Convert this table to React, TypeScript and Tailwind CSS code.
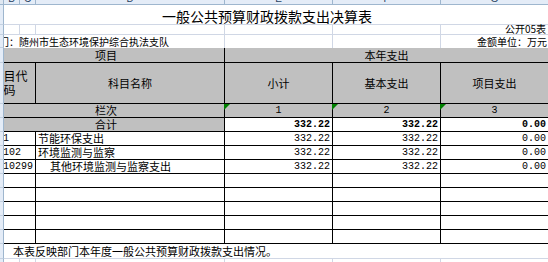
import React from 'react';

const cjk = "font-['Noto_Sans_CJK_SC','Noto_Sans_CJK_JP',sans-serif]";
const mono = "font-['Liberation_Mono','DejaVu_Sans_Mono',monospace]";

const lines = [
  { code: '211', name: '节能环保支出', indent: false, total: '332.22', basic: '332.22', project: '0.00' },
  { code: '21102', name: '环境监测与监察', indent: false, total: '332.22', basic: '332.22', project: '0.00' },
  { code: '2110299', name: '其他环境监测与监察支出', indent: true, total: '332.22', basic: '332.22', project: '0.00' },
];

function Strip() {
  return <div className="border-r border-b border-r-[#9eb6ce] border-b-[#c3d0e0] bg-[#e4ecf7]" />;
}

function ColHead({ letter }: { letter: string }) {
  return (
    <div className="overflow-hidden border-r border-b border-[#9eb6ce] bg-[#e4ecf7] text-center">
      <div className="-mt-[6px] font-['Liberation_Sans',sans-serif] text-[10px] leading-[10px] text-[#27415f]">
        {letter}
      </div>
    </div>
  );
}

function Flag() {
  return (
    <span className="absolute -left-px top-0 h-0 w-0 border-t-[6px] border-r-[6px] border-t-[#008000] border-r-transparent" />
  );
}

export default function App() {
  const blackCell = 'border-r border-b border-black';
  const lightCell = 'border-r border-b border-[#d0d7e5]';
  const num = `${blackCell} ${mono} flex items-center justify-end pr-[2px] text-[10px] leading-[13px] text-black`;

  return (
    <div className={`h-[262px] w-[548px] overflow-hidden bg-white text-black ${cjk}`}>
      <div className="grid w-[549px] grid-cols-[4px_16px_16px_189px_108px_108px_108px] grid-rows-[5px_20px_10px_13px_15px_41px_14px_14px_repeat(8,14px)_15px_4px]">
        {/* column letters */}
        <div className="border-r border-b border-[#9eb6ce] bg-[#dfe7f1]" />
        {['B', 'C', 'D', 'E', 'F', 'G'].map((l) => (
          <ColHead key={l} letter={l} />
        ))}

        {/* title */}
        <Strip />
        <div className="col-span-6 flex items-end justify-center border-b border-[#d0d7e5] pr-[19px] text-[14px] leading-[16px]">
          一般公共预算财政拨款支出决算表
        </div>

        {/* form number */}
        <Strip />
        <div className={lightCell} />
        <div className={lightCell} />
        <div className={lightCell} />
        <div className={lightCell} />
        <div className={lightCell} />
        <div className={`${lightCell} flex items-end justify-end pr-[2px] text-[10px] leading-[10px]`}>
          公开05表
        </div>

        {/* unit row */}
        <Strip />
        <div className="col-span-3 flex items-end overflow-hidden border-r border-[#d0d7e5] text-[10px] leading-[12px]">
          <span className="-ml-[15px] whitespace-nowrap">部门：随州市生态环境保护综合执法支队</span>
        </div>
        <div className="border-r border-[#d0d7e5]" />
        <div className="border-r border-[#d0d7e5]" />
        <div className="flex items-end justify-end whitespace-nowrap pr-[2px] text-[10px] leading-[12px]">
          金额单位：万元
        </div>

        {/* header row 1 */}
        <Strip />
        <div className={`${blackCell} col-span-3 flex items-center justify-center bg-[#c0c0c0] pr-[16px] text-[11px] leading-[13px]`}>
          项目
        </div>
        <div className={`${blackCell} col-span-3 flex items-center justify-center bg-[#c0c0c0] text-[11px] leading-[13px]`}>
          本年支出
        </div>

        {/* header row 2 */}
        <Strip />
        <div className={`${blackCell} col-span-2 flex items-center overflow-hidden bg-[#c0c0c0]`}>
          <div className="-ml-[13px] w-[37px] shrink-0 text-center text-[12px] leading-[14px]">科目代码</div>
        </div>
        <div className={`${blackCell} flex items-center justify-center bg-[#c0c0c0] text-[11px]`}>科目名称</div>
        <div className={`${blackCell} flex items-center justify-center bg-[#c0c0c0] text-[11px]`}>小计</div>
        <div className={`${blackCell} flex items-center justify-center bg-[#c0c0c0] text-[11px]`}>基本支出</div>
        <div className={`${blackCell} flex items-center justify-center bg-[#c0c0c0] text-[11px]`}>项目支出</div>

        {/* column numbers */}
        <Strip />
        <div className={`${blackCell} col-span-3 flex items-center justify-center bg-[#c0c0c0] pr-[16px] text-[11px] leading-[13px]`}>
          栏次
        </div>
        {['1', '2', '3'].map((n) => (
          <div
            key={n}
            className={`${blackCell} relative flex items-center justify-center bg-[#c0c0c0] ${mono} text-[10px] leading-[13px]`}
          >
            <Flag />
            {n}
          </div>
        ))}

        {/* total */}
        <Strip />
        <div className={`${blackCell} col-span-3 flex items-center justify-center bg-[#c0c0c0] pr-[16px] text-[11px] leading-[13px]`}>
          合计
        </div>
        <div className={`${num} font-bold`}>332.22</div>
        <div className={`${num} font-bold`}>332.22</div>
        <div className={`${num} font-bold`}>0.00</div>

        {/* items */}
        {lines.map((r) => (
          <React.Fragment key={r.code}>
            <Strip />
            <div className={`${blackCell} col-span-2 flex items-center overflow-hidden`}>
              <span className={`-ml-[13px] whitespace-nowrap ${mono} text-[10px] leading-[13px]`}>{r.code}</span>
            </div>
            <div
              className={`${blackCell} flex items-center whitespace-nowrap text-[11px] leading-[13px] ${
                r.indent ? 'pl-[14px]' : 'pl-[2px]'
              }`}
            >
              {r.name}
            </div>
            <div className={num}>{r.total}</div>
            <div className={num}>{r.basic}</div>
            <div className={num}>{r.project}</div>
          </React.Fragment>
        ))}

        {/* blank rows */}
        {[0, 1, 2, 3, 4].map((i) => (
          <React.Fragment key={i}>
            <Strip />
            <div className={`${blackCell} col-span-2`} />
            <div className={blackCell} />
            <div className={blackCell} />
            <div className={blackCell} />
            <div className={blackCell} />
          </React.Fragment>
        ))}

        {/* note */}
        <Strip />
        <div className="col-span-6 flex items-center whitespace-nowrap border-b border-[#d0d7e5] pl-[9px] text-[11px] leading-[13px]">
          本表反映部门本年度一般公共预算财政拨款支出情况。
        </div>

        {/* trailing grid */}
        <Strip />
        <div className="border-r border-[#d0d7e5]" />
        <div className="border-r border-[#d0d7e5]" />
        <div className="border-r border-[#d0d7e5]" />
        <div className="border-r border-[#d0d7e5]" />
        <div className="border-r border-[#d0d7e5]" />
        <div className="border-r border-[#d0d7e5]" />
      </div>
    </div>
  );
}
